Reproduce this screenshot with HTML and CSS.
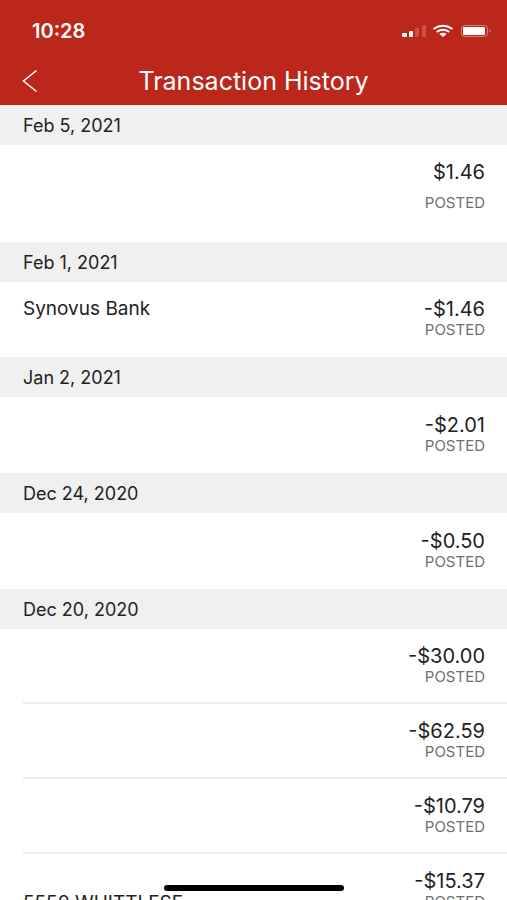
FILE: index.html
```html
<!DOCTYPE html>
<html lang="en">
<head>
<meta charset="utf-8">
<meta name="viewport" content="width=device-width, initial-scale=1">
<title>Transaction History</title>
<link rel="stylesheet" href="styles.css">
</head>
<body>
<div class="app">
  <header class="top">
    <div class="status">
      <span class="time">10:28</span>
      <svg class="indicators" width="92" height="16" viewBox="0 0 92 16" aria-hidden="true">
        <g fill="#fff">
          <rect x="2" y="10" width="5" height="4" rx="1"/>
          <rect x="9" y="8" width="4" height="6" rx="1"/>
          <rect x="15" y="5" width="4" height="9" rx="1" opacity=".2"/>
          <rect x="22" y="2" width="4" height="12" rx="1" opacity=".2"/>
          <path d="M39.400 10.900Q43 8.800 46.600 10.900L43 14Z"/>
        </g>
        <g fill="none" stroke="#fff" stroke-width="2">
          <path d="M33.500 6Q43 -.5 52.500 6"/>
          <path d="M36.700 9Q43 4.500 49.300 9"/>
        </g>
        <rect x="61.500" y="2.500" width="26" height="11" rx="3" fill="none" stroke="#fff" opacity=".4"/>
        <rect x="63" y="4" width="22" height="8" rx="1" fill="#fff"/>
        <path d="M89.500 6Q92 8 89.500 10Z" fill="#fff" opacity=".5"/>
      </svg>
    </div>
    <div class="nav">
      <button class="back" type="button" aria-label="Back">
        <svg width="16" height="24" viewBox="0 0 16 24" aria-hidden="true"><path d="M14.500 1.500L1.500 12L14.500 22.500" fill="none" stroke="#fff" stroke-width="1.600"/></svg>
      </button>
      <h1>Transaction History</h1>
    </div>
  </header>
  <main>
    <section>
      <h2>Feb 5, 2021</h2>
      <ul>
        <li class="loose"><span class="amount">$1.46</span><span class="state">POSTED</span></li>
      </ul>
    </section>
    <section>
      <h2>Feb 1, 2021</h2>
      <ul>
        <li><span class="name">Synovus Bank</span><span class="amount">-$1.46</span><span class="state">POSTED</span></li>
      </ul>
    </section>
    <section>
      <h2>Jan 2, 2021</h2>
      <ul>
        <li class="unnamed"><span class="amount">-$2.01</span><span class="state">POSTED</span></li>
      </ul>
    </section>
    <section>
      <h2>Dec 24, 2020</h2>
      <ul>
        <li class="unnamed"><span class="amount">-$0.50</span><span class="state">POSTED</span></li>
      </ul>
    </section>
    <section>
      <h2>Dec 20, 2020</h2>
      <ul>
        <li><span class="amount">-$30.00</span><span class="state">POSTED</span></li>
        <li><span class="amount">-$62.59</span><span class="state">POSTED</span></li>
        <li><span class="amount">-$10.79</span><span class="state">POSTED</span></li>
        <li><span class="amount">-$15.37</span><span class="memo">5550 WHITTLESE</span><span class="state">POSTED</span></li>
      </ul>
    </section>
  </main>
  <div class="home"></div>
</div>
</body>
</html>
```
FILE: styles.css
```css
* {
  box-sizing: border-box;
}

body {
  margin: 0;
  background: #fff;
  color: #222;
  font-family: Inter, "Liberation Sans", sans-serif;
}

.app {
  height: 100vh;
  overflow: hidden;
}

.top {
  background: #bb271a;
  color: #fff;
  padding-top: 16px;
}

.status {
  display: flex;
  align-items: center;
  justify-content: space-between;
  height: 30px;
  padding: 0 15px 0 32px;
}

.time {
  font-size: 20px;
  font-weight: 600;
}

.nav {
  display: grid;
  grid-template-columns: 60px 1fr 60px;
  align-items: center;
  height: 59px;
  padding-top: 10px;
}

.back {
  display: flex;
  align-items: center;
  height: 48px;
  padding: 0 0 0 22px;
  border: 0;
  background: none;
}

h1 {
  margin: 0;
  font-size: 25px;
  font-weight: 400;
  line-height: 32px;
  text-align: center;
  white-space: nowrap;
}

h2 {
  margin: 0;
  padding: 1px 23px 0;
  background: #f0f0f0;
  font-size: 18px;
  font-weight: 400;
  line-height: 39px;
}

ul {
  margin: 0;
  padding: 0;
  list-style: none;
}

li {
  position: relative;
  display: grid;
  grid-template-columns: 1fr auto;
  grid-template-rows: 22px 20px;
  align-content: start;
  min-height: 75px;
  padding: 16px 22px 0 23px;
}

li + li::before {
  content: "";
  position: absolute;
  top: -2px;
  left: 23px;
  right: 0;
  height: 2px;
  background: #ececec;
}

.loose {
  row-gap: 10px;
  min-height: 97px;
}

.unnamed {
  min-height: 76px;
  padding-top: 17px;
}

.name,
.memo {
  font-size: 19px;
  line-height: 22px;
}

.amount {
  grid-column: 2;
  font-size: 20px;
  line-height: 22px;
  text-align: right;
}

.memo {
  grid-column: 1;
}

.state {
  grid-column: 2;
  color: #707070;
  font-size: 15px;
  line-height: 20px;
  text-align: right;
}

.home {
  position: fixed;
  bottom: 9px;
  left: 50%;
  width: 180px;
  height: 6px;
  margin-left: -90px;
  border-radius: 3px;
  background: #000;
}
```
